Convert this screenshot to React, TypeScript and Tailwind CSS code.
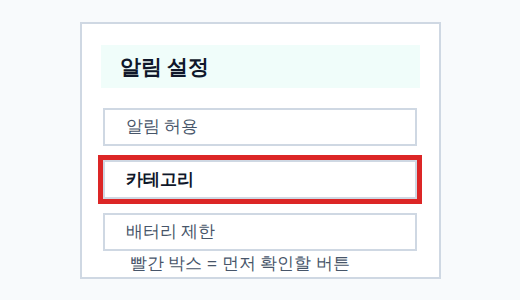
import React from "react";

export default function App() {
  return (
    <div className="w-[520px] h-[300px] bg-[#f8fafc] flex items-center justify-center font-['Liberation_Sans',sans-serif]">
      <div className="w-[361px] h-[257px] bg-white border-2 border-[#cfd8e3] px-[19px] pt-[21px] flex flex-col">
        <div className="h-[43px] bg-[#f0fdfa] flex items-center pl-[19px]">
          <span className="text-[21px] font-bold text-[#0f172a] leading-none">알림 설정</span>
        </div>
        <div className="flex flex-col gap-[14px] mt-[20px] pl-[2px] pr-[3px]">
          <div className="h-[38px] border-2 border-[#cfd8e3] flex items-center pl-[21px] text-[17px] leading-none text-[#475569]">
            알림 허용
          </div>
          <div className="h-[39px] border-2 border-[#cfd8e3] flex items-center pl-[21px] text-[17px] leading-none font-bold text-[#0f172a] outline-[5px] outline-solid outline-[#dc2626]">
            카테고리
          </div>
          <div className="h-[38px] border-2 border-[#cfd8e3] flex items-center pl-[21px] text-[17px] leading-none text-[#475569]">
            배터리 제한
          </div>
        </div>
        <div className="pl-[29px] mt-[3px] text-[17px] text-[#475569] leading-[20px]">
          빨간 박스 = 먼저 확인할 버튼
        </div>
      </div>
    </div>
  );
}
